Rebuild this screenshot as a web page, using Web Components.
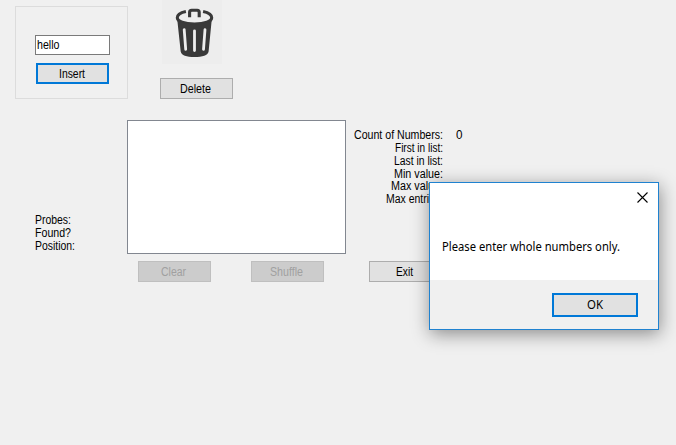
<!DOCTYPE html>
<html lang="en"><head><meta charset="utf-8"><title>Number list</title>
<style>html,body{margin:0;height:100%;overflow:hidden;background:#f0f0f0}</style></head>
<body><list-app></list-app>
<script>
const define = (name, html, init) => customElements.define(name, class extends HTMLElement {
  connectedCallback() {
    if (this.shadowRoot) return;
    this.attachShadow({mode: 'open'}).innerHTML = html;
    if (init) init.call(this, this.shadowRoot);
  }
});

// Text scaled horizontally to occupy the width given in "w".
define('fit-text', `<style>
:host{display:flex;align-items:flex-start;height:13px;line-height:12px;white-space:nowrap}
:host(.short){height:12px}
span{display:block;flex:none;transform-origin:0 50%}
</style><span><slot></slot></span>`, function (root) {
  const w = +this.getAttribute('w'), s = root.querySelector('span');
  const natural = s.getBoundingClientRect().width;
  this.style.width = w + 'px';
  if (natural) s.style.transform = `scaleX(${w / natural})`;
});

define('win-button', `<style>
:host{display:flex;box-sizing:border-box;width:73px;height:21px;flex:none;align-items:center;justify-content:center;padding:1px 3px 0 0;background:#e1e1e1;border:1px solid #adadad;color:#000}
:host([default]){border:2px solid #0078d7;padding-right:1px}
:host([disabled]){background:#ccc;border-color:#bfbfbf;color:#a0a0a0}
</style><slot></slot>`);

define('text-box', `<style>
:host{display:flex;box-sizing:border-box;width:75px;height:20px;align-items:center;padding-left:1px;border:1px solid #7a7a7a;background:#fff}
</style><slot></slot>`);

define('group-box', `<style>
:host{display:flex;flex-direction:column;gap:8px;box-sizing:border-box;width:113px;height:93px;padding:28px 0 0 19px;border:1px solid #dcdcdc}
</style><slot></slot>`);

define('trash-icon', `<style>:host{display:block;width:60px;height:64px;background:#ededed}svg{display:block}</style>
<svg width="60" height="64" viewBox="162 0 60 64" fill="none" stroke="#393939">
<path d="M185.9 11.6C180 12.8 177.3 15 177.3 17.8C177.3 21.5 184.5 24 194.5 24S211.7 21.5 211.7 17.8C211.7 15 209 12.8 203.1 11.6" stroke-width="3.1"/>
<path d="M189.6 17.3V12.2Q189.6 10.2 191.6 10.2H197.2Q199.2 10.2 199.2 12.2V17.3" stroke-width="3.1"/>
<path d="M177.3 20Q183 24.3 194.5 24.3T211.7 20L208.6 51.5C208.1 55.2 202.3 57.1 194.5 57.1S181.2 55.2 180.7 51.5Z" fill="#393939" stroke="none"/>
<path d="M184.2 29.6L185.7 49.4M194.5 30.8V50.6M205 29.6L203.5 49.4" stroke="#eee" stroke-width="2.8" stroke-linecap="round"/>
</svg>`);

define('message-dialog', `<style>
:host{display:grid;grid-template-rows:1fr 49px;box-sizing:border-box;width:230px;height:148px;border:1px solid #1f82d0;background:#fff;box-shadow:1px 4px 17px rgba(0,0,0,.42);font:12px/16px "Noto Sans","Open Sans",sans-serif;color:#000}
main{display:flex;flex-direction:column;padding:9px 10px 0 12px}
svg{display:block;align-self:flex-end}
.msg{margin-top:38px}
footer{display:flex;justify-content:flex-end;align-items:center;padding-right:20px;background:#f0f0f0}
win-button{width:86px;height:24px;padding:2px 0 0}
</style><main><svg width="11" height="11" fill="none" stroke="#000" stroke-width="1.1"><path d="M.5 .5L10.5 10.5M10.5 .5L.5 10.5"/></svg>
<div class="msg"><slot></slot></div></main><footer><win-button default><fit-text w="16">OK</fit-text></win-button></footer>`);

define('list-app', `<style>
:host{display:block;box-sizing:border-box;position:relative;width:676px;height:445px;overflow:hidden;background:#f0f0f0;font:12px/13px "Liberation Sans",Arial,sans-serif;color:#000}
.top{display:flex;height:120px;padding-left:15px}
group-box{margin-top:6px}
.del{display:flex;flex-direction:column;gap:14px;margin-left:32px}
trash-icon{margin-left:2px}
.mid{display:grid;grid-template-columns:92px 219px 97px auto;padding-left:35px;height:134px}
.left{align-self:end;padding-bottom:1px}
.list{box-sizing:border-box;background:#fff;border:1px solid #828790}
.stats{display:flex;flex-direction:column;align-items:flex-end;padding-top:9px}
.val{padding:9px 0 0 13px}
.buttons{display:flex;padding:7px 0 0 138px}
.buttons win-button:nth-child(2){margin:0 45px 0 40px}
.buttons win-button:nth-child(3){padding-right:2px}
message-dialog{position:absolute;left:429px;top:182px}
</style>
<div class="top"><group-box><text-box><fit-text w="22.5">hello</fit-text></text-box><win-button default style="margin-left:1px"><fit-text w="26">Insert</fit-text></win-button></group-box>
<div class="del"><trash-icon></trash-icon><win-button><fit-text w="31">Delete</fit-text></win-button></div></div>
<div class="mid"><div class="left"><fit-text w="36">Probes:</fit-text><fit-text w="36">Found?</fit-text><fit-text w="40">Position:</fit-text></div>
<div class="list"></div>
<div class="stats"><fit-text w="89">Count of Numbers:</fit-text><fit-text w="48">First in list:</fit-text><fit-text w="49">Last in list:</fit-text><fit-text class="short" w="49">Min value:</fit-text><fit-text w="52">Max value:</fit-text><fit-text w="57">Max entries:</fit-text></div>
<div class="val"><fit-text w="6.5">0</fit-text></div></div>
<div class="buttons"><win-button disabled><fit-text w="25">Clear</fit-text></win-button><win-button disabled><fit-text w="33">Shuffle</fit-text></win-button><win-button><fit-text w="17">Exit</fit-text></win-button></div>
<message-dialog><fit-text w="178">Please enter whole numbers only.</fit-text></message-dialog>`);
</script></body></html>
